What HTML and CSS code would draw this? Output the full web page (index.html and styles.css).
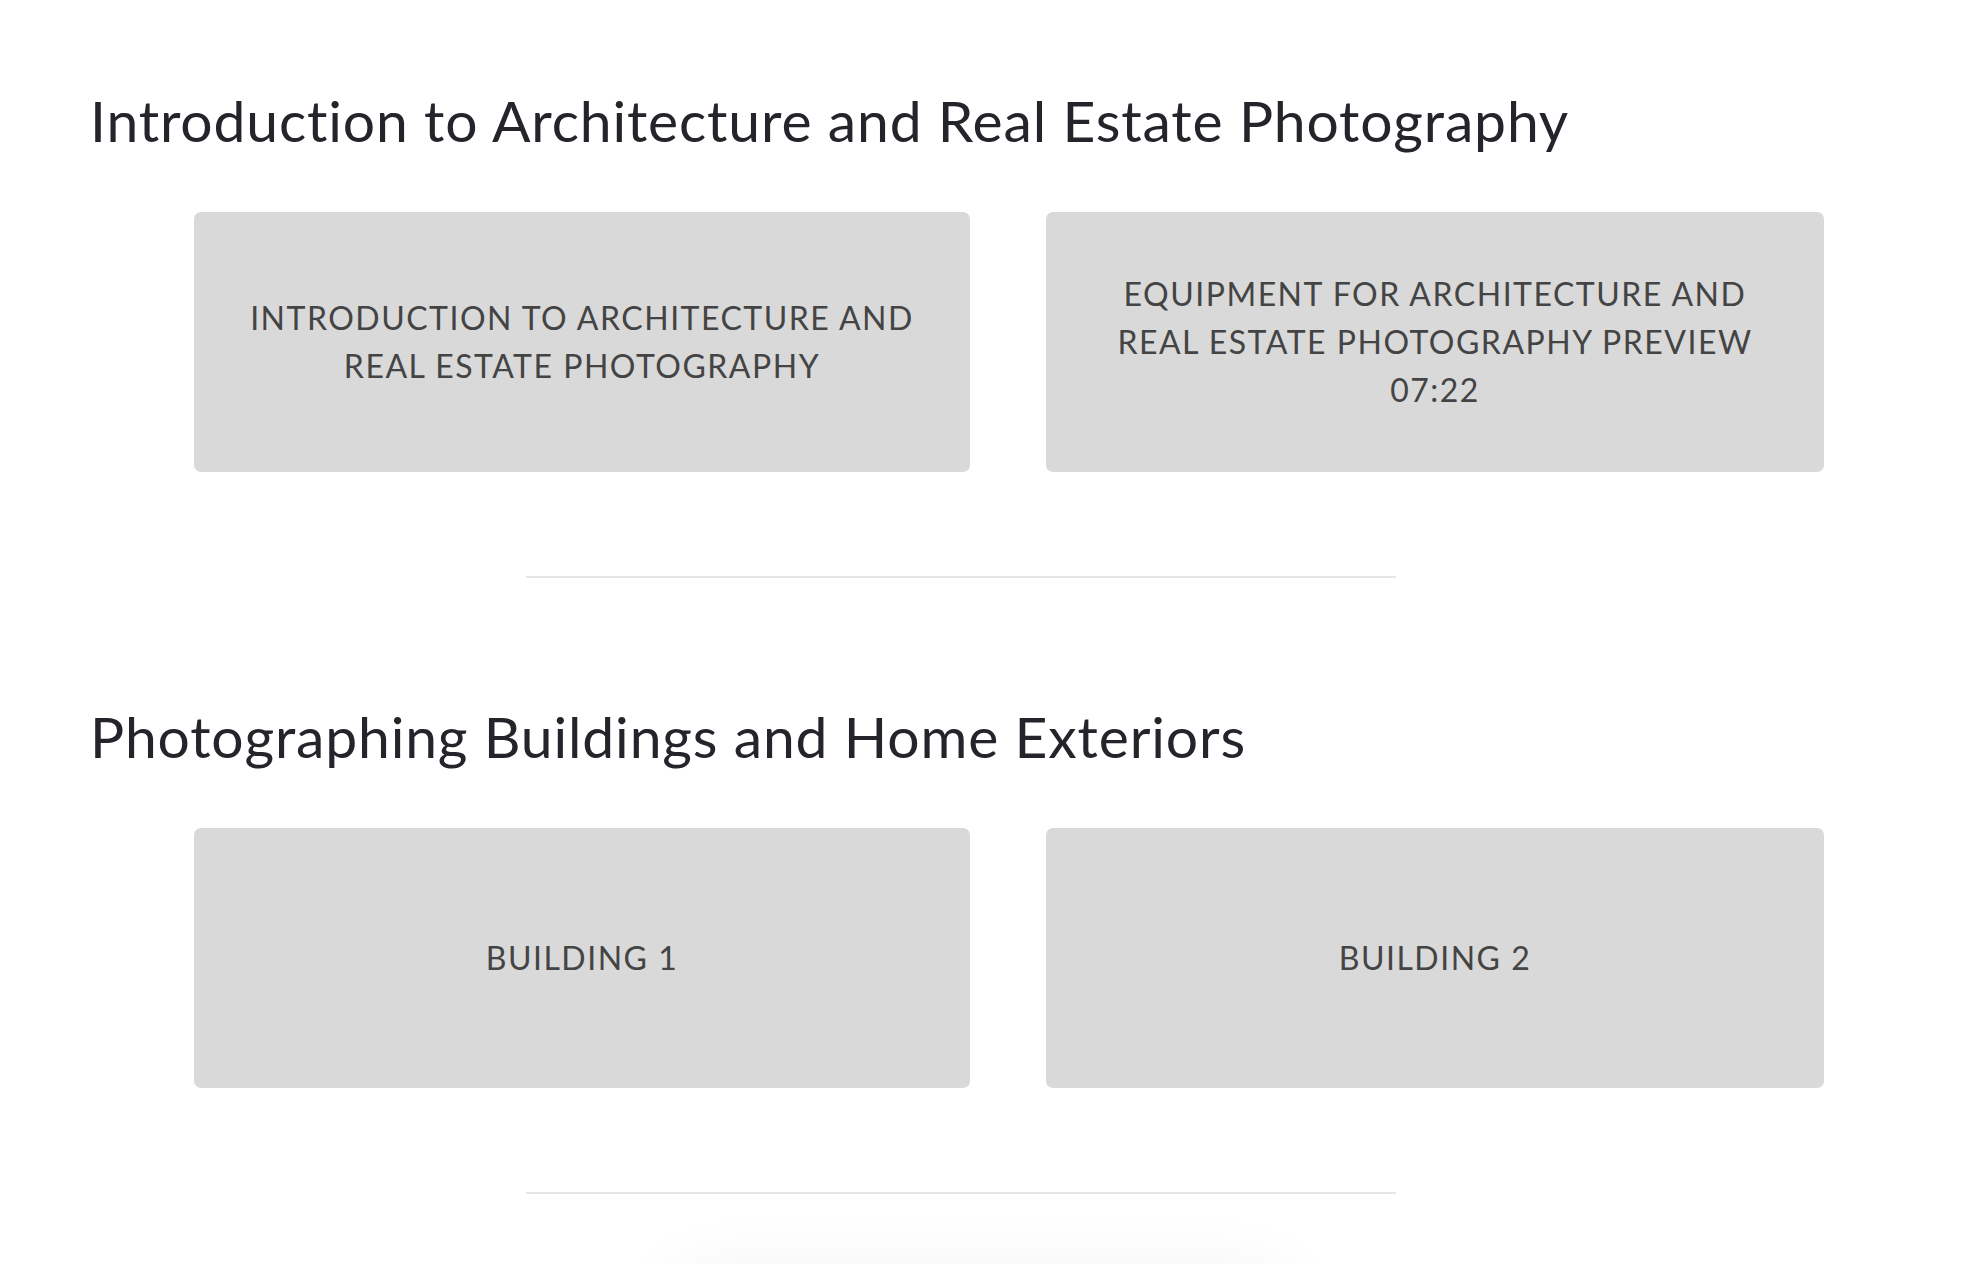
FILE: index.html
```html
<!DOCTYPE html>
<html lang="en">
<head>
<meta charset="utf-8">
<title>Architecture and Real Estate Photography</title>
<link rel="stylesheet" href="styles.css">
</head>
<body>
<main class="page">
  <section class="chapter">
    <h2 class="chapter-title">Introduction to Architecture and Real Estate Photography</h2>
    <div class="lessons">
      <a class="lesson" href="#">Introduction to Architecture and Real Estate Photography</a>
      <a class="lesson" href="#">Equipment for Architecture and Real Estate Photography Preview 07:22</a>
    </div>
    <hr class="divider">
  </section>
  <section class="chapter">
    <h2 class="chapter-title">Photographing Buildings and Home Exteriors</h2>
    <div class="lessons">
      <a class="lesson" href="#">Building 1</a>
      <a class="lesson" href="#">Building 2</a>
    </div>
    <hr class="divider">
  </section>
  <div class="next-block"></div>
</main>
</body>
</html>
```

FILE: styles.css
```css
html, body {
  margin: 0;
  padding: 0;
  background: #ffffff;
}
body {
  font-family: Lato, "Open Sans", sans-serif;
  overflow: hidden;
}
.page {
  padding-top: 86px;
}
.chapter {
  display: flex;
  flex-direction: column;
}
.chapter + .chapter {
  margin-top: 124px;
}
.chapter-title {
  margin: 0 0 58px 90px;
  font-family: Lato, sans-serif;
  font-weight: 400;
  font-size: 57px;
  line-height: 68px;
  color: #23252a;
  letter-spacing: 0.85px;
  font-variant-ligatures: none;
}
.lessons {
  display: grid;
  grid-template-columns: 776px 778px;
  column-gap: 76px;
  margin-left: 194px;
}
.lesson {
  height: 260px;
  box-sizing: border-box;
  padding: 0 40px 0;
  display: flex;
  align-items: center;
  justify-content: center;
  text-align: center;
  background: #d9d9d9;
  border-radius: 7px;
  color: #444444;
  text-decoration: none;
  text-transform: uppercase;
  font-family: Lato, sans-serif;
  font-size: 32px;
  line-height: 48px;
  letter-spacing: 1.5px;
  font-variant-ligatures: none;
}
.divider {
  margin: 104px 0 0 526px;
  width: 870px;
  height: 2px;
  border: 0;
  background: #e6e6e6;
}
.next-block {
  margin: 96px 0 0 680px;
  width: 600px;
  height: 300px;
  background: #ffffff;
  box-shadow: 0 0 80px rgba(0, 0, 0, 0.09);
}
```
